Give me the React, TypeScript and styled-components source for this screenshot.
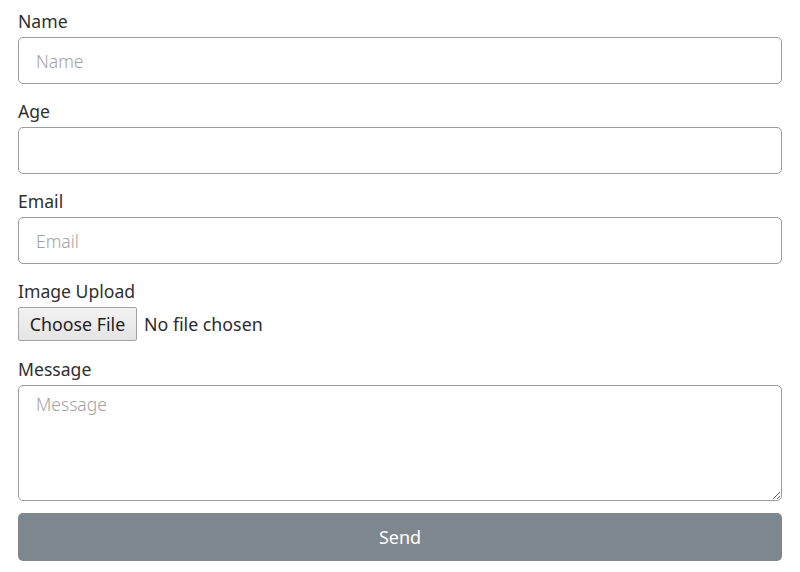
import React from "react";
import styled, { createGlobalStyle } from "styled-components";

const GlobalStyle = createGlobalStyle`
  html, body {
    margin: 0;
    padding: 0;
    background: #ffffff;
  }
  body {
    font-family: "Noto Sans", "Open Sans", sans-serif;
    color: #2b2b2b;
  }
`;

const Form = styled.form`
  box-sizing: border-box;
  width: 800px;
  padding: 8px 18px 0 18px;
`;

const Group = styled.div<{ $gap?: number }>`
  margin-bottom: ${(props) => props.$gap ?? 14}px;
`;

const Label = styled.label`
  display: block;
  font-size: 17.6px;
  line-height: 27px;
  margin-bottom: 2px;
  color: #2f2f2f;
`;

const Input = styled.input`
  box-sizing: border-box;
  display: block;
  width: 100%;
  height: 47px;
  padding: 0 17px;
  border: 1px solid #9c9c9c;
  border-radius: 5px;
  font-family: inherit;
  font-size: 17.5px;
  font-weight: 300;
  color: #333;
  outline: none;
  &::placeholder {
    color: #a2a2a2;
  }
`;

const FileInput = styled.input`
  display: block;
  height: 35px;
  font-family: inherit;
  font-size: 17.8px;
  color: #2b2b2b;
  &::file-selector-button {
    height: 34px;
    width: 119px;
    margin-right: 7px;
    padding: 0 4px;
    font-family: inherit;
    font-size: 17.8px;
    color: #1e1e1e;
    background: linear-gradient(#f2f2f2, #e4e4e4);
    border: 1px solid #a3a3a3;
    border-radius: 2px;
  }
`;

const TextArea = styled.textarea`
  box-sizing: border-box;
  display: block;
  width: 100%;
  height: 116px;
  padding: 6px 17px;
  border: 1px solid #9c9c9c;
  border-radius: 5px;
  font-family: inherit;
  font-size: 17.5px;
  font-weight: 300;
  outline: none;
  &::placeholder {
    color: #a2a2a2;
  }
`;

const SendButton = styled.button`
  box-sizing: border-box;
  display: block;
  width: 100%;
  height: 48px;
  border: none;
  border-radius: 5px;
  background: #7f878e;
  color: #ffffff;
  font-family: inherit;
  font-size: 18px;
`;

const App = () => {
  return (
    <>
      <GlobalStyle />
      <Form onSubmit={(e) => e.preventDefault()}>
        <Group>
          <Label htmlFor="name">Name</Label>
          <Input id="name" type="text" placeholder="Name" />
        </Group>
        <Group>
          <Label htmlFor="age">Age</Label>
          <Input id="age" type="text" />
        </Group>
        <Group>
          <Label htmlFor="email">Email</Label>
          <Input id="email" type="email" placeholder="Email" />
        </Group>
        <Group>
          <Label htmlFor="image">Image Upload</Label>
          <FileInput id="image" type="file" />
        </Group>
        <Group $gap={12}>
          <Label htmlFor="message">Message</Label>
          <TextArea id="message" placeholder="Message" />
        </Group>
        <SendButton type="submit">Send</SendButton>
      </Form>
    </>
  );
};

export default App;
